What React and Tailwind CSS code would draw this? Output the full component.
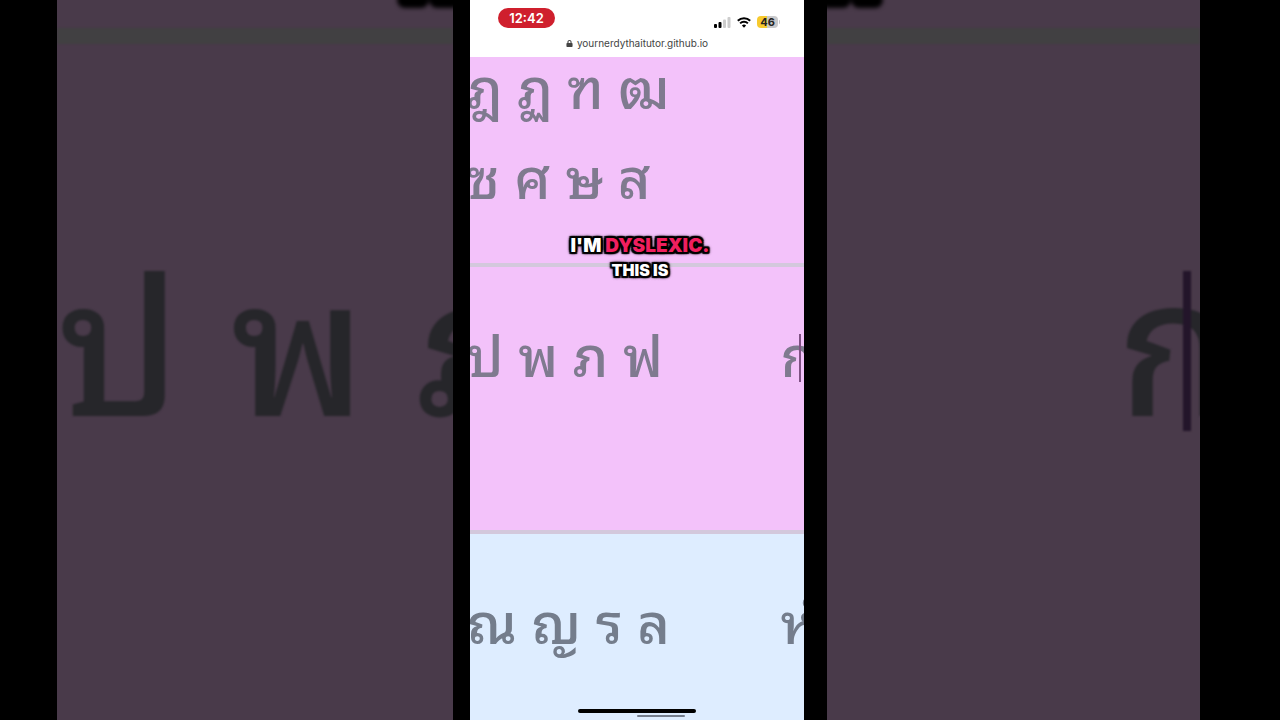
import { FaLock } from "react-icons/fa";

const groups = [
  { id: "high", lines: ["ฎ ฏ ฑ ฒ", "ซ ศ ษ ส"], next: "", tone: "bg-[#f3c2fa]", height: "h-[208px]", offset: "-mt-[18px]" },
  { id: "mid", lines: ["ป พ ภ ฟ"], next: "ก", caret: true, tone: "bg-[#f3c2fa]", height: "h-[267px]", offset: "mt-10" },
  { id: "low", lines: ["ณ ญ ร ล"], next: "หํ", tone: "bg-[#deedff]", height: "h-[186px]", offset: "mt-10" },
];

export default function App() {
  return (
    <main className="flex min-h-screen overflow-hidden bg-black font-['Inter','Liberation_Sans',sans-serif]">
      <div className="grid w-full grid-cols-[57fr_396fr_17fr_334fr_23fr_373fr_80fr]">
        <Backdrop className="col-start-2">
          <span>ป พ ภ</span>
        </Backdrop>
        <Phone />
        <Backdrop className="col-start-6" mirrored>
          <span className="relative -mr-9">
            ก
            <i className="absolute top-[70px] right-[45px] h-40 w-2 bg-[#23152a]" />
          </span>
        </Backdrop>
      </div>
    </main>
  );
}

function Backdrop({ className, mirrored, children }) {
  return (
    <section
      aria-hidden="true"
      className={`${className} relative flex h-screen flex-col overflow-hidden bg-[#493a4a]`}
    >
      <div className="h-7 shrink-0" />
      <div className="h-4 shrink-0 bg-[#414042] blur-[1px]" />
      <div
        className={`flex pt-[157px] font-['Noto_Sans_Thai_Looped','Loma','Garuda','Waree','Noto_Serif_Thai','Noto_Sans',sans-serif] text-[190px] leading-[260px] font-medium whitespace-nowrap text-[#26262a] blur-[1px] ${mirrored ? "justify-end" : ""}`}
      >
        {children}
      </div>
      <div className={`absolute -top-2 flex blur-[2px] ${mirrored ? "-left-2" : "-right-2"}`}>
        <div className="h-4 w-8 rounded-full bg-black" />
        <div className="h-4 w-8 rounded-full bg-black" />
      </div>
    </section>
  );
}

function Phone() {
  return (
    <section className="relative col-start-4 flex h-screen min-w-0 flex-col overflow-hidden bg-[#deedff]">
      <StatusBar />
      <LetterTable />
      <Caption />
      <div className="absolute inset-x-0 bottom-[7px] mx-auto h-1 w-[118px] rounded-full bg-black" />
      <div className="absolute bottom-[3px] left-1/2 h-0.5 w-12 rounded-full bg-[#747d8c]" />
    </section>
  );
}

function StatusBar() {
  return (
    <header className="h-[57px] shrink-0 bg-white">
      <div className="flex h-9 items-center justify-between pr-6 pl-7">
        <time className="w-[57px] rounded-full bg-[#cf1f2d] text-center text-[13px] leading-5 font-semibold text-white">
          12:42
        </time>
        <div className="flex items-center gap-[6px] pt-2">
          <SignalIcon />
          <WifiIcon />
          <Battery level={46} />
        </div>
      </div>
      <a
        href="https://yournerdythaitutor.github.io"
        className="flex items-center justify-center gap-1 text-[10px] leading-[14px] text-[#444]"
      >
        <FaLock className="size-[7px]" />
        yournerdythaitutor.github.io
      </a>
    </header>
  );
}

function LetterTable() {
  return (
    <table className="w-full table-fixed border-collapse font-['Noto_Sans_Thai_Looped','Loma','Garuda','Waree','Noto_Serif_Thai','Noto_Sans',sans-serif] text-[56px] leading-[90px] font-medium whitespace-nowrap text-[#7f7a8f]">
      <tbody>
        {groups.map((group) => (
          <tr key={group.id} className={`${group.tone} border-b-4 border-[#d3c8dc] align-top last:border-b-0 last:text-[#747d8c]`}>
            <td className={`${group.height} w-[93%]`}>
              <div className={`${group.offset} -ml-[3px]`}>
                {group.lines.map((line) => (
                  <div key={line}>{line}</div>
                ))}
              </div>
            </td>
            <td className={group.height}>
              <div className={`${group.offset} relative`}>
                {group.next}
                {group.caret && <i className="absolute top-[27px] left-[18px] h-12 w-0.5 bg-[#7e5183]" />}
              </div>
            </td>
          </tr>
        ))}
      </tbody>
    </table>
  );
}

function Caption() {
  return (
    <p className="absolute inset-x-0 top-[234px] pl-1.5 text-center font-black text-white [text-shadow:2px_0_1px_#000,-2px_0_1px_#000,0_2px_1px_#000,0_-2px_1px_#000,2px_2px_1px_#000,-2px_2px_1px_#000,2px_-2px_1px_#000,-2px_-2px_1px_#000,0_0_4px_#000,0_0_4px_#000]">
      <span className="block text-[19px] leading-6">
        I'M <span className="text-[#f01f5f]">DYSLEXIC.</span>
      </span>
      <span className="block text-[16px] leading-6">THIS IS</span>
    </p>
  );
}

function SignalIcon() {
  return (
    <svg width="17" height="11" viewBox="0 0 17 11" aria-hidden="true">
      <rect x="0" y="7" width="3" height="4" rx="1" />
      <rect x="4.5" y="5" width="3" height="6" rx="1" />
      <rect x="9" y="2.5" width="3" height="8.5" rx="1" fill="#ccc" />
      <rect x="13.5" y="0" width="3" height="11" rx="1" fill="#ccc" />
    </svg>
  );
}

function WifiIcon() {
  return (
    <svg width="14" height="11" viewBox="0 0 14 11" fill="none" stroke="#000" strokeWidth="2" aria-hidden="true">
      <path d="M0.8 3.8a8.8 8.8 0 0 1 12.4 0" />
      <path d="M3.1 6.4a5.5 5.5 0 0 1 7.8 0" />
      <path d="M7 10.8 4.9 8.5a3 3 0 0 1 4.2 0z" fill="#000" stroke="none" />
    </svg>
  );
}

function Battery({ level }) {
  return (
    <div className="flex items-center gap-px">
      <div className="w-[21px] rounded-[4px] bg-linear-to-r from-[#f7ca2e] from-46% to-[#c9c9cb] to-46% text-center text-[11px] leading-3 font-bold text-[#222]">
        {level}
      </div>
      <i className="h-1 w-px rounded-r bg-[#c9c9cb]" />
    </div>
  );
}
